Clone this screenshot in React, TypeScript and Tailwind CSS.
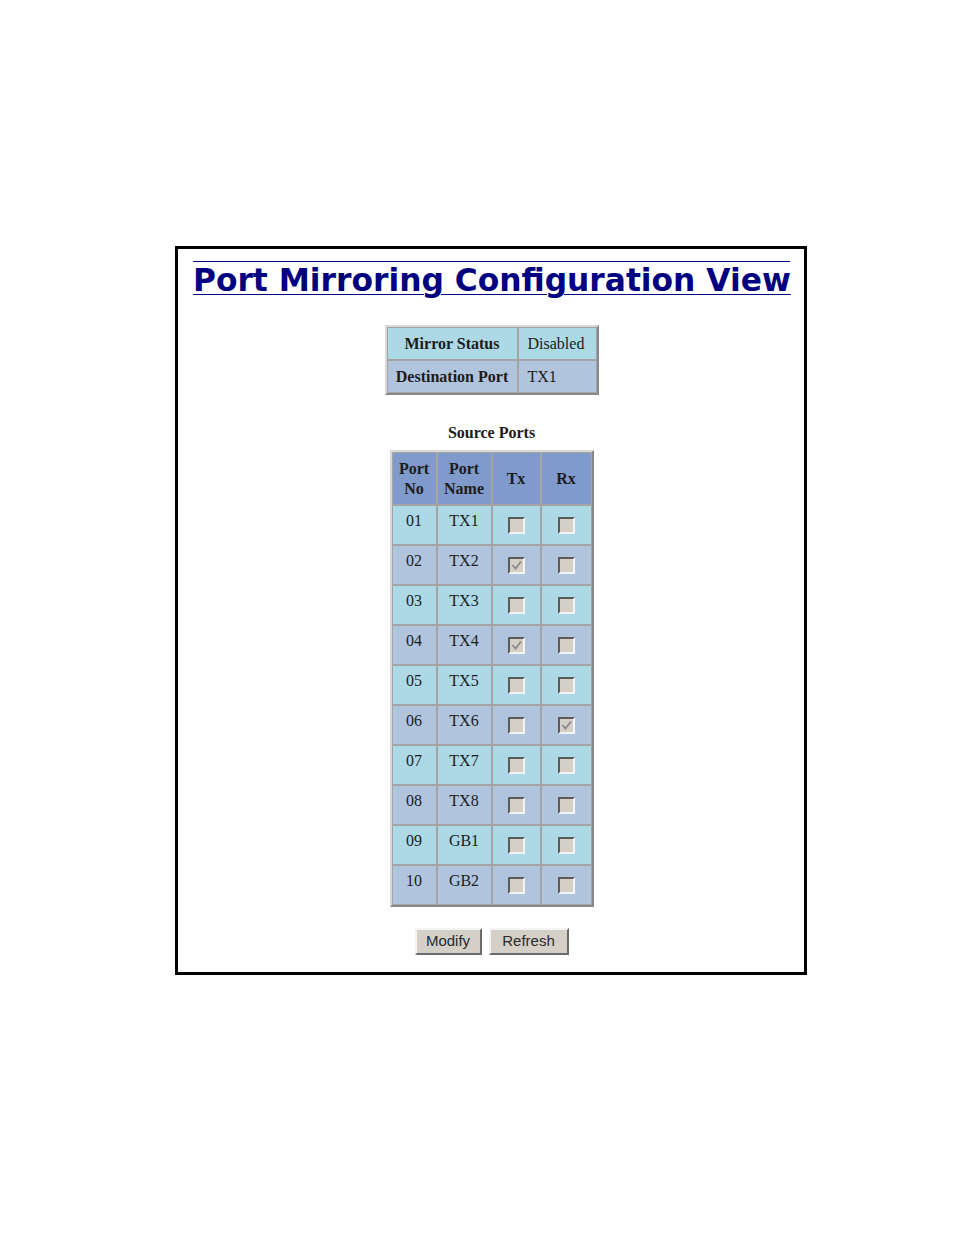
const ports = [
	{ no: "01", name: "TX1", tx: false, rx: false },
	{ no: "02", name: "TX2", tx: true, rx: false },
	{ no: "03", name: "TX3", tx: false, rx: false },
	{ no: "04", name: "TX4", tx: true, rx: false },
	{ no: "05", name: "TX5", tx: false, rx: false },
	{ no: "06", name: "TX6", tx: false, rx: true },
	{ no: "07", name: "TX7", tx: false, rx: false },
	{ no: "08", name: "TX8", tx: false, rx: false },
	{ no: "09", name: "GB1", tx: false, rx: false },
	{ no: "10", name: "GB2", tx: false, rx: false },
];

const Box = ({ checked }: { checked: boolean }) => (
	<div className="mx-auto mt-[11px] flex h-[17px] w-[17px] items-center justify-center border-2 border-t-[#5a5a5a] border-l-[#5a5a5a] border-r-[#f4f4f4] border-b-[#f4f4f4] bg-[#d4d0c8]">
		{checked && (
			<svg width="11" height="11" viewBox="0 0 11 11">
				<path d="M1.5 5 L4.5 8.5 L10 1.5" fill="none" stroke="#8a8a8a" strokeWidth="1.8" />
			</svg>
		)}
	</div>
);

const cell = "border border-[#a4a4a4] p-0";

const App = () => {
	return (
		<div className="min-h-[1235px] w-[954px] bg-white pt-[246px] pl-[175px]">
			<div className="h-[729px] w-[632px] border-[3px] border-black pl-[15px] pr-[14px] pt-[12px] [font-family:'Liberation_Serif',serif]">
				<div className="border-t border-[#000080] pt-[1px] text-center whitespace-nowrap">
					<span className="text-[31.3px] leading-[35px] font-bold text-[#000080] underline decoration-1 underline-offset-[3px] [font-family:'DejaVu_Sans',Verdana,sans-serif]">
						Port Mirroring Configuration View
					</span>
				</div>

				<table className="mx-auto mt-[27px] border-separate border-spacing-0 border-2 border-t-[#d8d8d8] border-l-[#d8d8d8] border-r-[#888888] border-b-[#888888] text-[16px] text-[#1c1c1c]">
					<tbody>
						<tr className="h-[33px] bg-[#add8e6]">
							<td className={`${cell} w-[131px] text-center font-bold`}>Mirror Status</td>
							<td className={`${cell} w-[79px] pl-[9px]`}>Disabled</td>
						</tr>
						<tr className="h-[33px] bg-[#b0c4de]">
							<td className={`${cell} text-center font-bold`}>Destination Port</td>
							<td className={`${cell} pl-[9px]`}>TX1</td>
						</tr>
					</tbody>
				</table>

				<div className="mt-[26px] text-center text-[16px] font-bold text-[#1c1c1c]">Source Ports</div>

				<table className="mx-auto mt-[5px] border-separate border-spacing-0 border-2 border-t-[#d8d8d8] border-l-[#d8d8d8] border-r-[#888888] border-b-[#888888] text-[16px] text-[#1c1c1c]">
					<thead>
						<tr className="h-[53px] bg-[#7f9acb] font-bold leading-[20px]">
							<th className={`${cell} w-[45px]`}>Port<br />No</th>
							<th className={`${cell} w-[55px]`}>Port<br />Name</th>
							<th className={`${cell} w-[49px]`}>Tx</th>
							<th className={`${cell} w-[51px]`}>Rx</th>
						</tr>
					</thead>
					<tbody>
						{ports.map((p, i) => (
							<tr key={p.no} className={`h-[40px] ${i % 2 === 0 ? "bg-[#add8e6]" : "bg-[#b0c4de]"}`}>
								<td className={`${cell} pb-[8px] text-center`}>{p.no}</td>
								<td className={`${cell} pb-[8px] text-center`}>{p.name}</td>
								<td className={`${cell} align-top`}>
									<Box checked={p.tx} />
								</td>
								<td className={`${cell} align-top`}>
									<Box checked={p.rx} />
								</td>
							</tr>
						))}
					</tbody>
				</table>

				<div className="mt-[21px] flex justify-center gap-[7px] [font-family:'Liberation_Sans',Arial,sans-serif] text-[15px] text-[#2a2a2a]">
					<button className="h-[27px] w-[67px] border-2 border-t-[#f4f4f4] border-l-[#f4f4f4] border-r-[#6a6a6a] border-b-[#6a6a6a] bg-[#d4d0c8]">
						Modify
					</button>
					<button className="h-[27px] w-[80px] border-2 border-t-[#f4f4f4] border-l-[#f4f4f4] border-r-[#6a6a6a] border-b-[#6a6a6a] bg-[#d4d0c8]">
						Refresh
					</button>
				</div>
			</div>
		</div>
	);
};

export default App;
